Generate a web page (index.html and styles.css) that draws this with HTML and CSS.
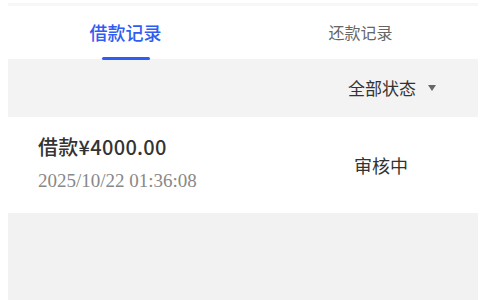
FILE: index.html
```html
<!DOCTYPE html>
<html lang="zh">
<head>
<meta charset="utf-8">
<link rel="stylesheet" href="styles.css">
</head>
<body>
<div class="page">
  <div class="topstrip"></div>
  <div class="tabs">
    <div class="tab active">借款记录<span class="bar"></span></div>
    <div class="tab">还款记录</div>
  </div>
  <div class="filter">
    <span class="filter-label">全部状态</span>
    <span class="caret"></span>
  </div>
  <div class="card">
    <div class="info">
      <div class="amount">借款¥4000.00</div>
      <div class="date">2025/10/22 01:36:08</div>
    </div>
    <div class="status">审核中</div>
  </div>
  <div class="rest"></div>
</div>
</body>
</html>
```
FILE: styles.css
```css
html, body {
  margin: 0;
  padding: 0;
  background: #ffffff;
  font-family: "Noto Sans CJK SC", "Noto Sans", sans-serif;
}
.page {
  margin-left: 8px;
  width: 470px;
  height: 300px;
  display: flex;
  flex-direction: column;
  overflow: hidden;
}
.topstrip {
  margin-top: 3px;
  height: 3px;
  background: #f7f7f7;
}
.tabs {
  height: 53px;
  display: flex;
}
.tab {
  flex: 1;
  position: relative;
  display: flex;
  align-items: center;
  justify-content: center;
  font-size: 16px;
  color: #666666;
  padding-bottom: 2px;
}
.tab.active {
  font-size: 18px;
  color: #2f5cf2;
  font-weight: 500;
}
.bar {
  position: absolute;
  bottom: -1px;
  left: 50%;
  margin-left: -24px;
  width: 48px;
  height: 3px;
  border-radius: 2px;
  background: #2f5cf2;
}
.filter {
  height: 58px;
  background: #f3f3f3;
  display: flex;
  align-items: center;
  justify-content: flex-end;
  padding-right: 42px;
}
.filter-label {
  font-size: 17px;
  color: #333333;
  margin-top: -2px;
}
.caret {
  margin-left: 12px;
  width: 0;
  height: 0;
  border-left: 4.5px solid transparent;
  border-right: 4.5px solid transparent;
  border-top: 6px solid #666666;
}
.card {
  height: 96px;
  display: flex;
  align-items: center;
  padding-left: 30px;
}
.info {
  width: 316px;
  display: flex;
  flex-direction: column;
}
.amount {
  font-size: 20px;
  font-weight: 500;
  color: #333333;
  line-height: 26px;
  margin-top: -4px;
  letter-spacing: 0.3px;
}
.date {
  font-family: "Liberation Serif", serif;
  font-size: 19px;
  color: #888888;
  line-height: 22px;
  margin-top: 10px;
}
.status {
  font-size: 18px;
  color: #333333;
}
.rest {
  flex: 1;
  background: #f2f2f2;
}
```
